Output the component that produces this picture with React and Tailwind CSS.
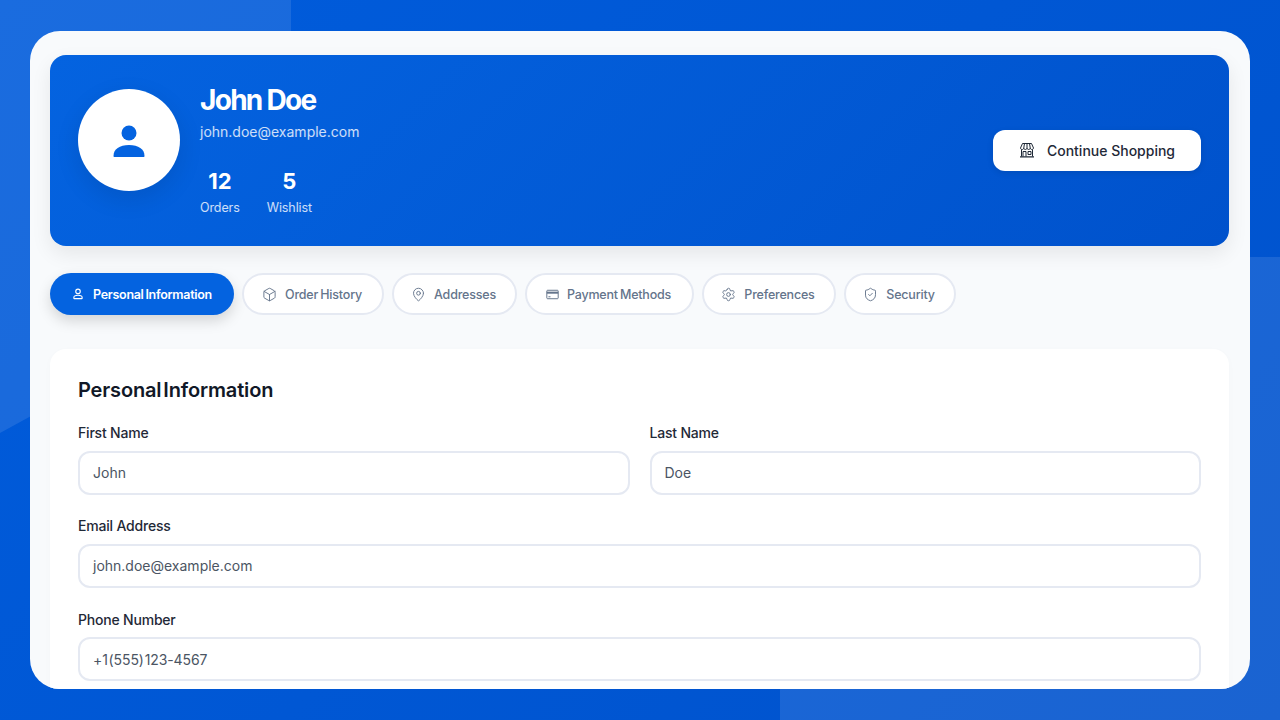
import { Box, MapPin, Settings, ShieldCheck } from 'lucide-react';

function PersonIcon() {
  return (
    <svg width="12" height="12" viewBox="0 0 16 16" fill="none" stroke="currentColor" strokeWidth="1.500">
      <circle cx="8" cy="4.500" r="3" />
      <path d="M2.500 12.500c0-1.800 2.400-2.800 5.500-2.800s5.500 1 5.500 2.800v1.200c0 .3-.2.5-.5.5H3c-.3 0-.5-.2-.5-.5z" />
    </svg>
  );
}

function CardIcon() {
  return (
    <svg width="13" height="13" viewBox="0 0 16 16" fill="none" stroke="currentColor" strokeWidth="1.200">
      <rect x="1" y="2.800" width="14" height="10.400" rx="1" />
      <rect x="1" y="4.500" width="14" height="2.500" fill="currentColor" stroke="none" />
      <path d="M3 10.800h2.500" />
    </svg>
  );
}

function StoreIcon() {
  return (
    <svg width="16" height="16" viewBox="0 0 16 16" fill="none" stroke="#1f2937" strokeWidth="1">
      <path d="M3.500 1.500h9l2 4.500c0 1-1 1.500-1.650 1.500S11.300 7 11.250 6c0 1-.8 1.500-1.600 1.500S8 7 8 6c0 1-.8 1.500-1.650 1.500S4.800 7 4.750 6c0 1-.8 1.500-1.600 1.500S1.500 7 1.500 6z" />
      <path d="M5.500 1.500 4.750 6M10.500 1.500 11.250 6M8 1.500V6" />
      <path d="M2.500 7.500v7M13.500 7.500v7" />
      <path d="M4 14.500V9.500h3v5M9 9.500h3v3H9z" />
      <path d="M1 14.800h14" strokeWidth="1.300" />
    </svg>
  );
}

const tabs = [
  { label: 'Personal Information', icon: <PersonIcon />, active: true, w: 'w-[184px]' },
  { label: 'Order History', icon: <Box size={15} strokeWidth={1.5} />, w: 'w-[142px]' },
  { label: 'Addresses', icon: <MapPin size={15} strokeWidth={1.5} />, w: 'w-[125px]' },
  { label: 'Payment Methods', icon: <CardIcon />, w: 'w-[169px]' },
  { label: 'Preferences', icon: <Settings size={15} strokeWidth={1.5} />, w: 'w-[134px]' },
  { label: 'Security', icon: <ShieldCheck size={15} strokeWidth={1.5} />, w: 'w-[112px]' },
];

function Field({ label, value, valueClass = '' }) {
  return (
    <div>
      <label className="block text-[14px] leading-[21px] font-medium text-[#1f2937] tracking-[-0.2px] mb-[7.500px]">{label}</label>
      <div className={`h-[44px] border-2 border-[#e5e9f2] rounded-[12px] px-[13px] flex items-center text-[14px] text-[#4b5563] bg-white ${valueClass}`}>{value}</div>
    </div>
  );
}

function Stat({ value, label }) {
  return (
    <div className="text-center">
      <div className="text-[22px] leading-[33px] font-bold text-white">{value}</div>
      <div className="text-[12.500px] leading-[20px] tracking-[-0.1px] text-white/80">{label}</div>
    </div>
  );
}

export default function App() {
  return (
    <div className="relative w-full h-screen overflow-hidden bg-[linear-gradient(135deg,#005cdc,#0052cc)] font-['Inter','Liberation_Sans',sans-serif]">
      {/* background shapes */}
      <svg className="absolute left-0 top-0" width="291" height="440" viewBox="0 0 291 440" fill="#ffffff" fillOpacity="0.1">
        <path d="M0 0H291V300Q150 350 0 433Z" />
      </svg>
      <div className="absolute left-[780px] top-[257px] w-[600px] h-[600px] bg-white/10"></div>

      <div className="relative pt-[31px] px-[30px]">
        <div className="h-[658px] bg-[#f8fafc] rounded-[30px] overflow-hidden pl-[20px] pr-[21px] pt-[24px]">
          {/* profile header */}
          <div className="h-[191px] rounded-[16px] bg-[linear-gradient(135deg,#0463e0,#0052cc)] shadow-[0_8px_20px_rgba(0,0,0,0.08)] px-[28px] flex items-center justify-between">
            <div className="flex items-center gap-[20px]">
              <div className="w-[102px] h-[102px] mb-[21px] pt-[1px] rounded-full bg-white flex items-center justify-center shadow-[0_8px_24px_rgba(0,0,0,0.1)]">
                <svg width="32" height="32" viewBox="0 0 32 32" fill="#0463e0">
                  <circle cx="16" cy="8" r="7.500" />
                  <path d="M0.500 31c0-7 6-11 15.500-11s15.500 4 15.500 11c0 .6-.4 1-1 1H1.500c-.6 0-1-.4-1-1z" />
                </svg>
              </div>
              <div className="mb-[2px]">
                <h1 className="text-[28px] leading-[36px] font-bold text-white tracking-[-1.7px]">John Doe</h1>
                <p className="text-[14px] leading-[22px] mt-[3px] text-white/80">john.doe@example.com</p>
                <div className="flex gap-[27px] mt-[22px]">
                  <Stat value="12" label="Orders" />
                  <Stat value="5" label="Wishlist" />
                </div>
              </div>
            </div>
            <button className="w-[208px] h-[41px] pb-[1px] bg-white rounded-[12px] flex items-center justify-center gap-[12px] text-[14px] font-medium text-[#1f2937] shadow-[0_2px_6px_rgba(0,0,0,0.1)]">
              <StoreIcon />
              Continue Shopping
            </button>
          </div>

          {/* tabs */}
          <div className="flex gap-[8px] mt-[27px]">
            {tabs.map(({ label, icon, active, w }) => (
              <div
                key={label}
                className={
                  active
                    ? `${w} h-[42px] rounded-full bg-[#0463e0] text-white font-semibold text-[12.500px] tracking-[-0.3px] [word-spacing:-1px] flex items-center justify-center gap-[9px] shadow-[0_6px_14px_rgba(0,0,0,0.15)]`
                    : `${w} h-[42px] pr-[2px] rounded-full bg-white border-2 border-[#e5e9f2] text-[#64748b] font-medium text-[12.500px] tracking-[-0.2px] [word-spacing:-1px] flex items-center justify-center gap-[8px]`
                }
              >
                {icon}
                <span className="mt-[2px]">{label}</span>
              </div>
            ))}
          </div>

          {/* form card */}
          <div className="mt-[34px] bg-white rounded-[16px] px-[28px] pt-[26px] pb-[40px] shadow-[0_2px_8px_rgba(0,0,0,0.02)]">
            <h2 className="text-[20px] leading-[30px] font-semibold text-[#111827] tracking-[-0.15px] [word-spacing:-3px] mb-[17px]">Personal Information</h2>
            <div className="flex flex-col gap-[20.800px]">
              <div className="grid grid-cols-2 gap-[20px]">
                <Field label="First Name" value="John" />
                <Field label="Last Name" value="Doe" />
              </div>
              <Field label="Email Address" value="john.doe@example.com" />
              <Field label="Phone Number" value="+1 (555) 123-4567" valueClass="[word-spacing:-3px] tracking-[-0.1px]" />
            </div>
          </div>
        </div>
      </div>
    </div>
  );
}
